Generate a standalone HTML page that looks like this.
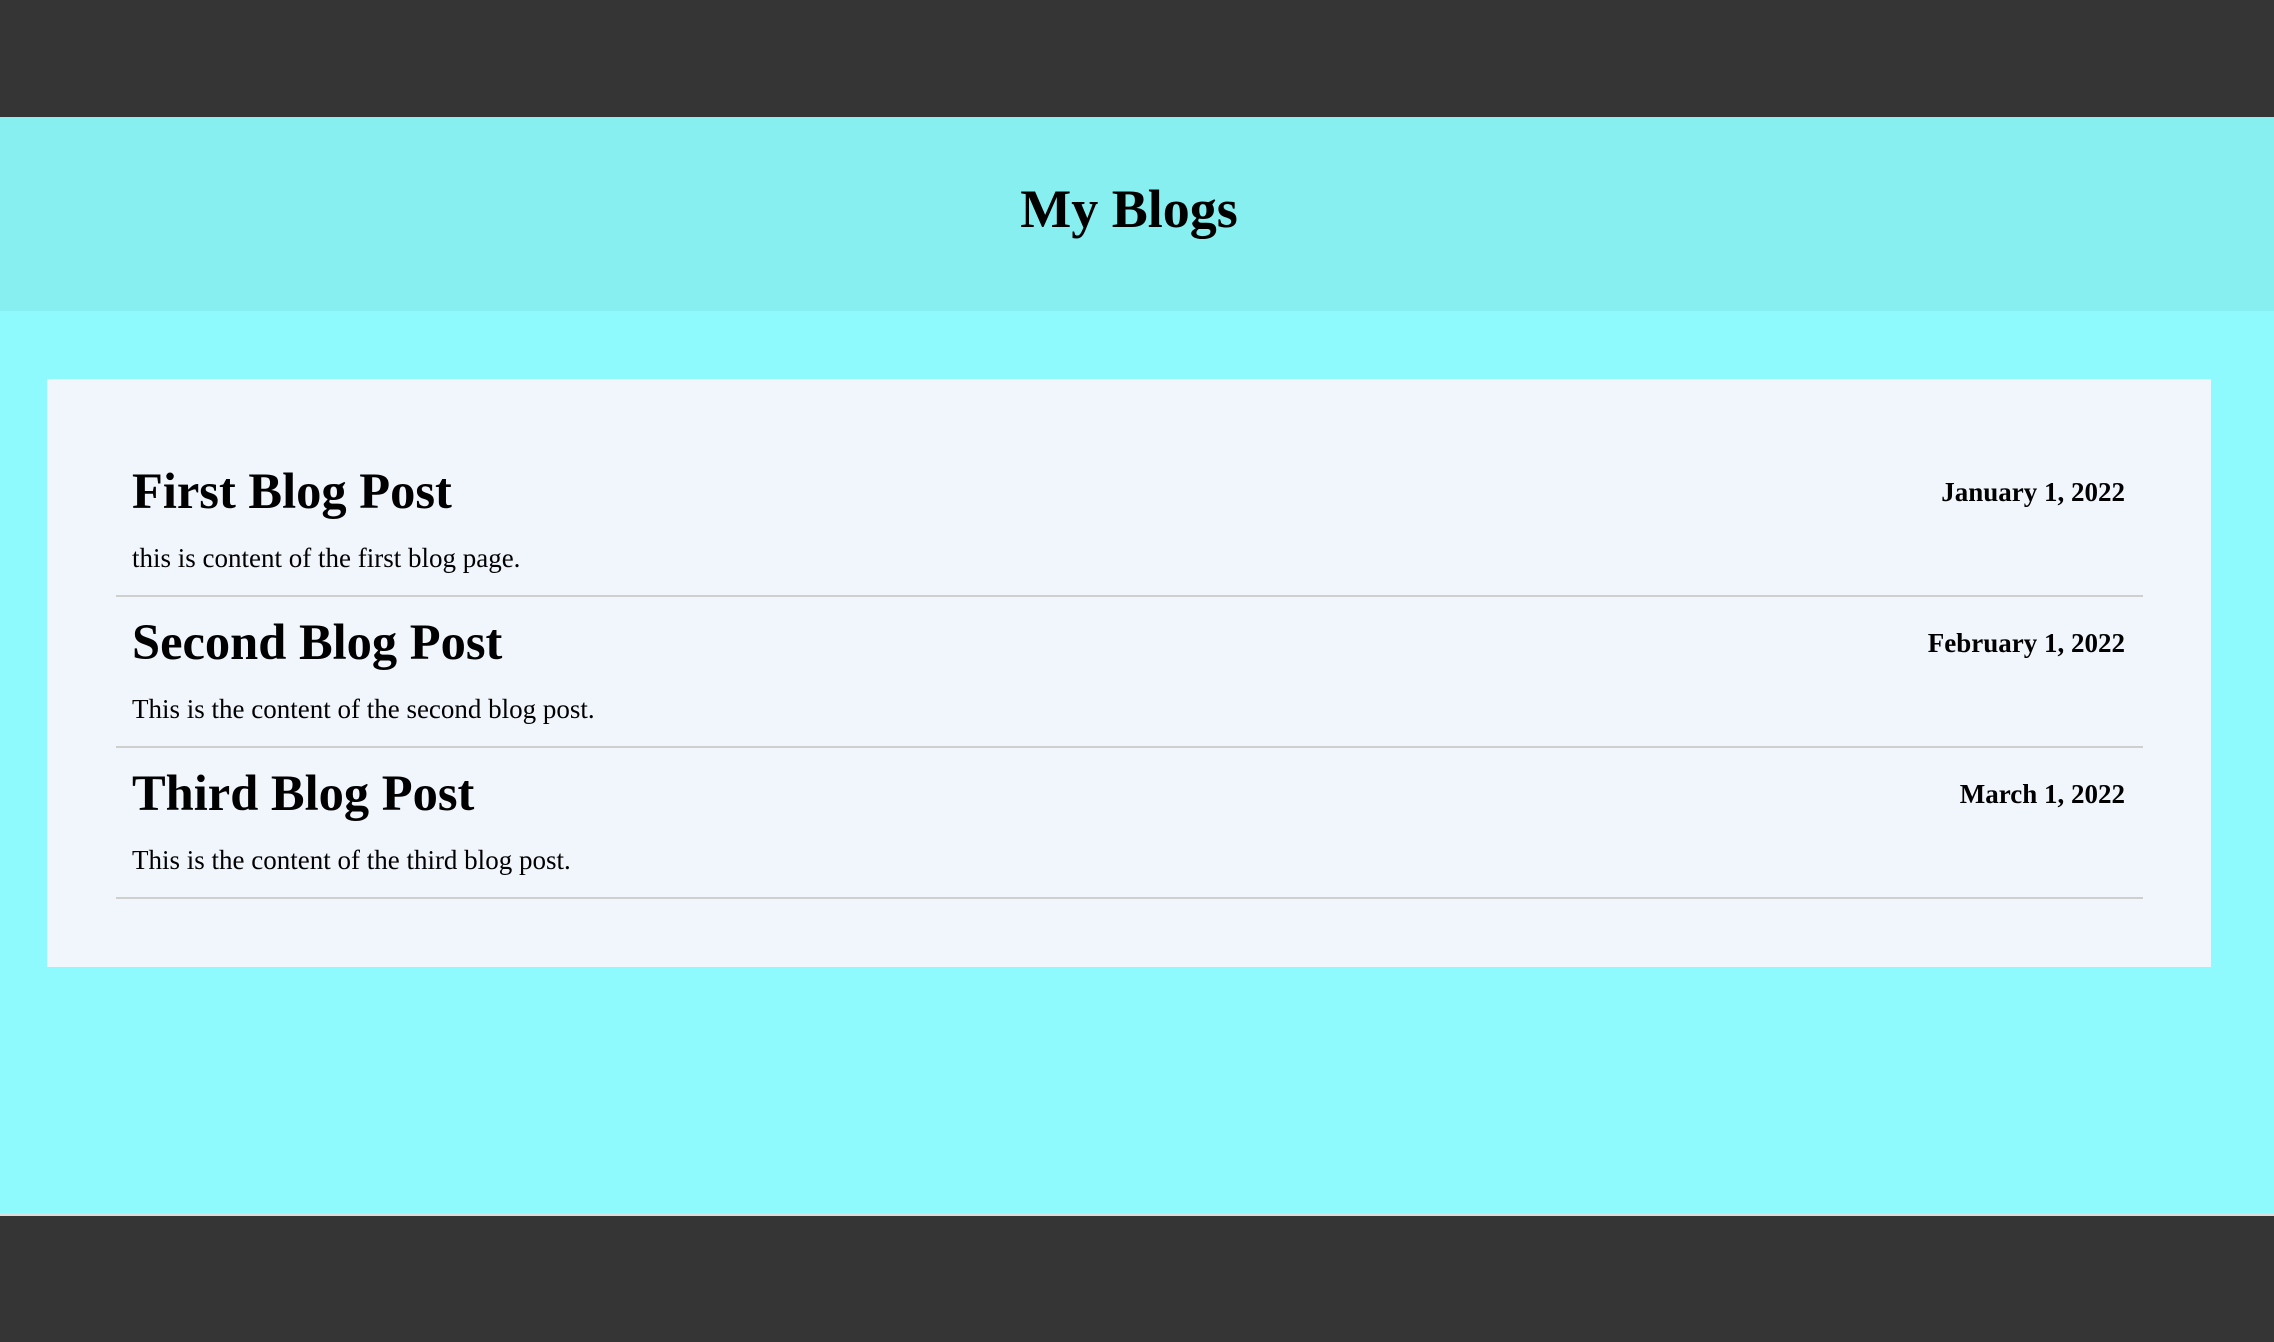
<!DOCTYPE html>
<html><head><meta charset="utf-8"><style>
*{margin:0;padding:0;box-sizing:border-box}
html,body{width:2274px;height:1342px;overflow:hidden;background:#8efafd;font-family:"Liberation Serif",serif;color:#000}
.a{position:absolute;white-space:nowrap;line-height:1}
#top{position:absolute;left:0;top:0;width:2274px;height:117px;background:#353535}
#hdr{position:absolute;left:0;top:117px;width:2274px;height:194px;background:#87eff0}
#card{position:absolute;left:47px;top:379px;width:2164px;height:588px;background:#f1f6fd}
.hr{position:absolute;left:116px;width:2027px;height:2px;background:#cfcfcf}
.t{font-size:50.5px;font-weight:bold;left:132px}
.p{font-size:27px;left:132px}
.d{font-size:27px;font-weight:bold;right:149px}
#fl{position:absolute;left:0;top:1213px;width:2274px;height:3px;background:#ddd}
#ft{position:absolute;left:0;top:1216px;width:2274px;height:126px;background:#353535}
</style></head><body>
<div id="top"></div>
<div id="hdr"></div>
<div class="a" style="left:-8px;width:2274px;text-align:center;top:182px;font-size:54px;font-weight:bold">My Blogs</div>
<div id="card"></div>
<div class="a t" style="top:466px">First Blog Post</div>
<div class="a d" style="top:479px">January 1, 2022</div>
<div class="a p" style="top:545px">this is content of the first blog page.</div>
<div class="hr" style="top:595px"></div>
<div class="a t" style="top:617px">Second Blog Post</div>
<div class="a d" style="top:630px">February 1, 2022</div>
<div class="a p" style="top:696px">This is the content of the second blog post.</div>
<div class="hr" style="top:746px"></div>
<div class="a t" style="top:768px">Third Blog Post</div>
<div class="a d" style="top:781px">March 1, 2022</div>
<div class="a p" style="top:847px">This is the content of the third blog post.</div>
<div class="hr" style="top:897px"></div>
<div id="fl"></div>
<div id="ft"></div>
</body></html>
